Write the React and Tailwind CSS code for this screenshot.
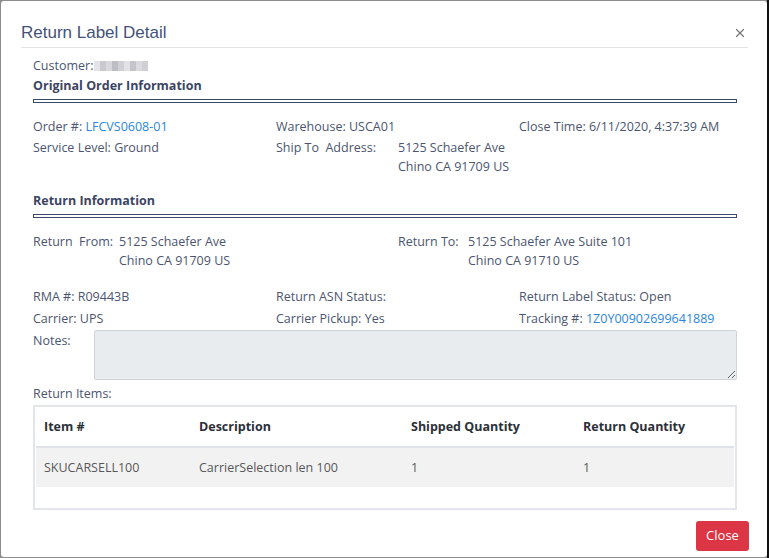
import { X } from "lucide-react";

const text = "text-[#4b5570]";
const link = "text-[#2b86dd]";

const blur = ["#e4e4e8", "#c9c9cf", "#d8d8dc", "#bdbdc4", "#d0d0d5", "#e2e2e6", "#c4c4ca", "#dadade", "#cfcfd4"];

function Field({ label, children }) {
  return (
    <div className="whitespace-nowrap">
      {label} {children}
    </div>
  );
}

function Address({ label, lines, labelWidth }) {
  return (
    <div className="flex">
      <div style={{ width: labelWidth }} className="shrink-0 whitespace-pre">
        {label}
      </div>
      <div>
        {lines.map((l) => (
          <div key={l} className="whitespace-nowrap">
            {l}
          </div>
        ))}
      </div>
    </div>
  );
}

function SectionTitle({ children, className }) {
  return (
    <div className={className}>
      <div className="font-bold text-[#3b4564] leading-[19px]">{children}</div>
      <div className="mt-[4px] h-[4px] border border-[#3b4a6b]" />
    </div>
  );
}

export default function App() {
  return (
    <div
      className="w-[769px] h-[558px] bg-[#8d8d8d] flex overflow-hidden"
      style={{ fontFamily: '"Open Sans", "Noto Sans", sans-serif' }}
    >
      <div className="mt-[1px] ml-[1px] w-[766px] h-[556px] bg-white rounded-[3px] flex flex-col">
        {/* Header */}
        <div className="ml-[20px] mr-[19px] pt-[21px] pb-[3px] border-b border-[#e3e3e3] flex items-center justify-between">
          <h1
            className="text-[17px] leading-[22px] text-[#44527a]"
            style={{ fontFamily: '"Liberation Sans", Arial, sans-serif' }}
          >
            Return Label Detail
          </h1>
          <X size={14} strokeWidth={2.2} className="text-[#7a7a7a] mr-[1px]" />
        </div>

        {/* Body */}
        <div className={`pl-[32px] pr-[30px] text-[12.5px] leading-[19px] ${text}`}>
          <div className="mt-[8px] flex items-center">
            <span>Customer:</span>
            <span className="ml-[1px] flex h-[10px]">
              {blur.map((c, i) => (
                <span key={i} className="w-[6px] h-[10px]" style={{ background: c }} />
              ))}
            </span>
          </div>

          <SectionTitle className="mt-[1px]">Original Order Information</SectionTitle>

          <div className="mt-[14px] grid grid-cols-[243px_243px_1fr]">
            <Field label="Order #:">
              <span className={link}>LFCVS0608-01</span>
            </Field>
            <Field label="Warehouse:">USCA01</Field>
            <Field label="Close Time:">6/11/2020, 4:37:39 AM</Field>
          </div>
          <div className="mt-[2px] grid grid-cols-[243px_1fr]">
            <Field label="Service Level:">Ground</Field>
            <Address
              label="Ship To  Address:"
              labelWidth={122}
              lines={["5125 Schaefer Ave", "Chino CA 91709 US"]}
            />
          </div>

          <SectionTitle className="mt-[15px]">Return Information</SectionTitle>

          <div className="mt-[14px] grid grid-cols-[365px_1fr]">
            <Address label="Return  From:" labelWidth={86} lines={["5125 Schaefer Ave", "Chino CA 91709 US"]} />
            <Address
              label="Return To:"
              labelWidth={70}
              lines={["5125 Schaefer Ave Suite 101", "Chino CA 91710 US"]}
            />
          </div>

          <div className="mt-[17px] grid grid-cols-[243px_243px_1fr]">
            <Field label="RMA #:">R09443B</Field>
            <Field label="Return ASN Status:" />
            <Field label="Return Label Status:">Open</Field>
          </div>
          <div className="mt-[3px] grid grid-cols-[243px_243px_1fr]">
            <Field label="Carrier:">UPS</Field>
            <Field label="Carrier Pickup:">Yes</Field>
            <Field label="Tracking #:">
              <span className={link}>1Z0Y00902699641889</span>
            </Field>
          </div>

          <div className="mt-[2px] flex">
            <div className="w-[61px] shrink-0 pt-[1px]">Notes:</div>
            <textarea
              readOnly
              className="flex-1 h-[50px] bg-[#e9ecef] border border-[#ced4da] rounded-[2px] outline-none"
            />
          </div>

          <div className="mt-[4px]">Return Items:</div>

          <div className="mt-[2px] h-[105px] border-2 border-[#e2e5ea] px-[1px]">
            <div className="grid grid-cols-[155px_212px_172px_1fr] px-[8px] h-[41px] items-center border-b-2 border-[#dfe2e7] font-bold text-[#2c3038]">
              <div>Item #</div>
              <div>Description</div>
              <div>Shipped Quantity</div>
              <div>Return Quantity</div>
            </div>
            <div className="grid grid-cols-[155px_212px_172px_1fr] px-[8px] h-[39px] items-center bg-[#f2f2f2] text-[#585858]">
              <div>SKUCARSELL100</div>
              <div>CarrierSelection len 100</div>
              <div>1</div>
              <div>1</div>
            </div>
          </div>
        </div>

        {/* Footer */}
        <div className="mt-[11px] mr-[18px] flex justify-end">
          <button className="h-[30px] w-[53px] rounded-[3px] bg-[#dc3545] text-white text-[13px]">
            Close
          </button>
        </div>
      </div>
      <div className="w-[2px] h-full bg-[#111]" />
    </div>
  );
}
